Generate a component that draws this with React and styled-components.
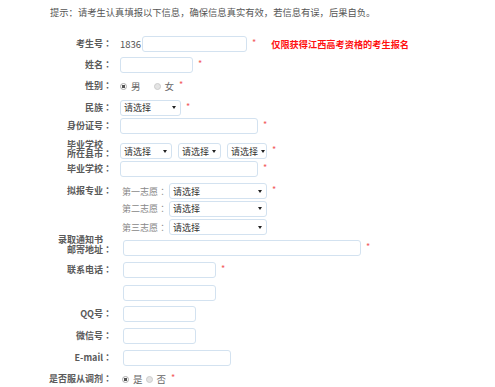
import React from "react";
import styled, { createGlobalStyle } from "styled-components";

const GlobalStyle = createGlobalStyle`
  body {
    margin: 0;
    background: #fff;
    font-family: "Noto Sans CJK SC", "Noto Sans", sans-serif;
    color: #555;
  }
`;

const App = () => {
  return (
    <Page>
      <GlobalStyle />
      <Hint>提示：请考生认真填报以下信息，确保信息真实有效，若信息有误，后果自负。</Hint>

      <Row $top={18}>
        <Label>考生号<Colon>：</Colon></Label>
        <Prefix>1836</Prefix>
        <Input $w={105} />
        <Star>*</Star>
        <Notice>仅限获得江西高考资格的考生报名</Notice>
      </Row>

      <Row $top={5}>
        <Label>姓名<Colon>：</Colon></Label>
        <Input $w={73} />
        <Star>*</Star>
      </Row>

      <Row $top={5}>
        <Label>性别<Colon>：</Colon></Label>
        <Radio $checked />
        <RadioText>男</RadioText>
        <Radio $space={13} />
        <RadioText>女</RadioText>
        <Star>*</Star>
      </Row>

      <Row $top={5.5}>
        <Label>民族<Colon>：</Colon></Label>
        <Select $w={61} />
        <Star>*</Star>
      </Row>

      <Row $top={2.5}>
        <Label>身份证号<Colon>：</Colon></Label>
        <Input $w={138} />
        <Star>*</Star>
      </Row>

      <Row $top={9}>
        <Label $lift={2} $lh={9.5}>
          <FirstLine>毕业学校</FirstLine>
          <br />
          所在县市<Colon>：</Colon>
        </Label>
        <Select $w={52} />
        <Select $w={43} $space={6} />
        <Select $w={40} $space={6} />
        <Star>*</Star>
      </Row>

      <Row $top={2}>
        <Label>毕业学校<Colon>：</Colon></Label>
        <Input $w={138} />
        <Star>*</Star>
      </Row>

      <Row $top={6}>
        <Label>拟报专业<Colon>：</Colon></Label>
        <SubLabel>第一志愿<Colon>：</Colon></SubLabel>
        <Select $w={98} />
        <Star>*</Star>
      </Row>

      <Row $top={1.5}>
        <Label />
        <SubLabel>第二志愿<Colon>：</Colon></SubLabel>
        <Select $w={98} />
      </Row>

      <Row $top={2.5}>
        <Label />
        <SubLabel>第三志愿<Colon>：</Colon></SubLabel>
        <Select $w={98} />
      </Row>

      <Row $top={5}>
        <Label $lift={3.5} $lh={9.5} $indent>
          <FirstLine>录取通知书</FirstLine>
          <br />
          邮寄地址<Colon>：</Colon>
        </Label>
        <Input $w={238} />
        <Star>*</Star>
      </Row>

      <Row $top={6}>
        <Label $indent>联系电话<Colon>：</Colon></Label>
        <Input $w={93} />
        <Star>*</Star>
      </Row>

      <Row $top={7}>
        <Label $indent />
        <Input $w={93} />
      </Row>

      <Row $top={5}>
        <Label $indent>QQ号<Colon>：</Colon></Label>
        <Input $w={73} />
      </Row>

      <Row $top={6}>
        <Label $indent>微信号<Colon>：</Colon></Label>
        <Input $w={73} />
      </Row>

      <Row $top={6}>
        <Label $indent>E-mail<Colon>：</Colon></Label>
        <Input $w={108} />
      </Row>

      <Row $top={5}>
        <Label>是否服从调剂<Colon>：</Colon></Label>
        <Radio $checked $space={2} />
        <RadioText>是</RadioText>
        <Radio $space={3} />
        <RadioText>否</RadioText>
        <Star>*</Star>
      </Row>
    </Page>
  );
};

export default App;

const Page = styled.div`
  width: 495px;
  height: 387px;
  overflow: hidden;
  box-sizing: border-box;
  padding-top: 6px;
`;

const Hint = styled.div`
  padding-left: 50px;
  font-size: 9.3px;
  line-height: 12px;
  color: #555;
  white-space: nowrap;
`;

const Row = styled.div`
  display: flex;
  align-items: center;
  height: 16px;
  margin-top: ${(p) => p.$top}px;
`;

const Label = styled.div`
  width: 112px;
  margin-right: ${(p) => (p.$indent ? 11 : 8)}px;
  flex-shrink: 0;
  text-align: right;
  font-size: 9px;
  font-weight: bold;
  color: #5a5a5a;
  white-space: nowrap;
  line-height: ${(p) => p.$lh || 16}px;
  position: relative;
  top: ${(p) => -(p.$lift || 0)}px;
`;

const Colon = styled.span`
  display: inline-block;
  width: 9px;
  text-align: center;
  font-family: "Noto Sans CJK TC", "Noto Sans CJK SC", sans-serif;
`;

const FirstLine = styled.span`
  padding-right: 9px;
`;

const SubLabel = styled.span`
  margin-left: 2px;
  width: 47px;
  flex-shrink: 0;
  font-size: 9px;
  color: #888;
  white-space: nowrap;
`;

const Prefix = styled.span`
  font-size: 9.5px;
  color: #555;
  width: 22px;
`;

const Input = styled.input`
  box-sizing: border-box;
  width: ${(p) => p.$w}px;
  height: 16px;
  margin: 0;
  padding: 0 3px;
  border: 1px solid #d3e2f0;
  border-radius: 3px;
  background: #fff;
  outline: none;
  flex-shrink: 0;
`;

const SelectBox = styled.div`
  box-sizing: border-box;
  width: ${(p) => p.$w}px;
  height: 16px;
  margin-left: ${(p) => p.$space || 0}px;
  padding: 0 4px 0 3px;
  border: 1px solid #d3e2f0;
  border-radius: 3px;
  display: flex;
  align-items: center;
  justify-content: space-between;
  flex-shrink: 0;
  font-size: 9px;
  color: #333;
  white-space: nowrap;
`;

const Caret = styled.span`
  width: 0;
  height: 0;
  border-left: 2.5px solid transparent;
  border-right: 2.5px solid transparent;
  border-top: 3.5px solid #222;
  margin-left: 3px;
`;

const Select = ({ $w, $space }) => (
  <SelectBox $w={$w} $space={$space}>
    <span>请选择</span>
    <Caret />
  </SelectBox>
);

const Star = styled.span`
  margin-left: 5px;
  font-size: 9px;
  color: #f25a5a;
  align-self: flex-start;
  line-height: 14px;
`;

const Notice = styled.span`
  margin-left: 15px;
  font-size: 9.2px;
  font-weight: bold;
  color: #f11;
  white-space: nowrap;
`;

const Radio = styled.span`
  box-sizing: border-box;
  width: 7px;
  height: 7px;
  border-radius: 50%;
  margin-left: ${(p) => p.$space || 0}px;
  margin-right: 4px;
  flex-shrink: 0;
  border: 1px solid ${(p) => (p.$checked ? "#aaa" : "#ccc")};
  background: ${(p) =>
    p.$checked ? "radial-gradient(circle, #555 0 1.6px, #fff 1.8px)" : "#e4e4e4"};
`;

const RadioText = styled.span`
  font-size: 9.5px;
  color: #666;
`;
